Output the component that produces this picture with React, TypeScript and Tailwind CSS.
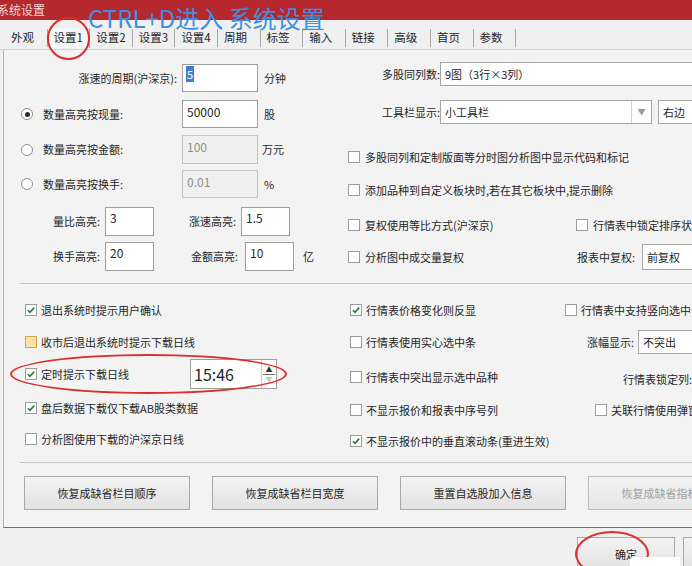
import React from "react";

const tabs = ["外观", "设置1", "设置2", "设置3", "设置4", "周期", "标签", "输入", "链接", "高级", "首页", "参数"];

function Check({ on, hover }: { on?: boolean; hover?: boolean }) {
  return (
    <span
      className={
        hover
          ? "w-[12px] h-[12px] shrink-0 border border-[#d6a445] bg-[#f9e2a6] flex items-center justify-center"
          : "w-[12px] h-[12px] shrink-0 border border-[#9c9c9c] bg-white flex items-center justify-center"
      }
    >
      {on && (
        <svg width="10" height="10" viewBox="0 0 10 10">
          <path d="M1.8 5.2 L4 7.4 L8.2 2.6" fill="none" stroke="#2c7a3f" strokeWidth="1.6" />
        </svg>
      )}
    </span>
  );
}

function Radio({ on }: { on?: boolean }) {
  return (
    <span className="w-[12px] h-[12px] shrink-0 rounded-full border border-[#8e8e8e] bg-white flex items-center justify-center">
      {on && <span className="w-[5px] h-[5px] rounded-full bg-[#2a2a2a]" />}
    </span>
  );
}

function CheckRow({ on, hover, label }: { on?: boolean; hover?: boolean; label: string }) {
  return (
    <div className="flex items-center whitespace-nowrap">
      <Check on={on} hover={hover} />
      <span className="ml-[4px]">{label}</span>
    </div>
  );
}

export default function App() {
  return (
    <div className="relative w-[692px] h-[566px] overflow-hidden bg-[#f0f0f0] text-[11px] leading-none text-[#262626] font-['Noto_Sans_CJK_SC','Noto_Sans',sans-serif]">
      {/* title bar */}
      <div className="h-[20px] bg-[#b5282d] text-[#f6d9d9] text-[12px] flex items-center -ml-[3px]">系统设置</div>

      {/* tab strip */}
      <div className="h-[30px] flex items-end pl-[5px] border-b border-[#d4d4d4]">
        {tabs.map((t, i) => (
          <div
            key={t}
            className={
              i === 1
                ? "w-[42.6px] h-[20px] mb-[1px] pl-[6px] flex items-center border-r border-[#a8a8a8] bg-[#f7f7f7] text-[11.5px]"
                : "w-[42.6px] h-[18px] mb-[2px] pl-[6px] flex items-center border-r border-[#a8a8a8] text-[11.5px]"
            }
          >
            {t}
          </div>
        ))}
      </div>

      {/* panel */}
      <div className="ml-[3px] h-[478px] border-l border-[#b4b4b4] border-b border-b-[#707070] bg-[#f3f3f3] flex flex-col">
        {/* top section */}
        <div className="h-[233px] flex">
          <div className="w-[331px] shrink-0 flex flex-col">
            <div className="mt-[14px] h-[28px] flex items-center">
              <span className="w-[173px] text-right">涨速的周期(沪深京):</span>
              <div className="ml-[5px] w-[76px] h-full bg-white border border-[#9e9e9e] px-[3px] pt-[4px]">
                <span className="bg-[#3d7fd6] text-white px-px">5</span>
              </div>
              <span className="ml-[6px]">分钟</span>
            </div>
            <div className="mt-[8px] h-[28px] flex items-center">
              <div className="w-[178px] flex items-center pl-[17px]">
                <Radio on />
                <span className="ml-[10px]">数量高亮按现量:</span>
              </div>
              <div className="w-[76px] h-full bg-white border border-[#9e9e9e] px-[4px] pt-[5px] text-[12px]">50000</div>
              <span className="ml-[6px]">股</span>
            </div>
            <div className="mt-[7px] h-[29px] flex items-center">
              <div className="w-[178px] flex items-center pl-[17px]">
                <Radio />
                <span className="ml-[10px]">数量高亮按金额:</span>
              </div>
              <div className="w-[76px] h-full bg-[#f0f0f0] border border-[#c4c4c4] px-[4px] pt-[5px] text-[12px] text-[#8c8c8c]">100</div>
              <span className="ml-[4px]">万元</span>
            </div>
            <div className="mt-[6px] h-[28px] flex items-center">
              <div className="w-[178px] flex items-center pl-[17px]">
                <Radio />
                <span className="ml-[10px]">数量高亮按换手:</span>
              </div>
              <div className="w-[76px] h-full bg-[#f0f0f0] border border-[#c4c4c4] px-[4px] pt-[5px] text-[12px] text-[#8c8c8c]">0.01</div>
              <span className="ml-[6px]">%</span>
            </div>
            <div className="mt-[9px] h-[29px] flex items-center">
              <span className="w-[96px] text-right">量比高亮:</span>
              <div className="ml-[5px] w-[49px] h-full bg-white border border-[#9e9e9e] px-[4px] pt-[4px] text-[12px]">3</div>
              <span className="w-[82px] text-right">涨速高亮:</span>
              <div className="ml-[5px] w-[49px] h-full bg-white border border-[#9e9e9e] px-[4px] pt-[4px] text-[12px]">1.5</div>
            </div>
            <div className="mt-[6px] h-[29px] flex items-center">
              <span className="w-[96px] text-right">换手高亮:</span>
              <div className="ml-[5px] w-[49px] h-full bg-white border border-[#9e9e9e] px-[4px] pt-[4px] text-[12px]">20</div>
              <span className="w-[84px] text-right">金额高亮:</span>
              <div className="ml-[7px] w-[49px] h-full bg-white border border-[#9e9e9e] px-[4px] pt-[4px] text-[12px]">10</div>
              <span className="ml-[9px]">亿</span>
            </div>
          </div>

          <div className="flex-1 flex flex-col whitespace-nowrap">
            <div className="mt-[12px] h-[24px] flex items-center">
              <span className="w-[105px] shrink-0 text-right">多股同列数:</span>
              <div className="w-[260px] shrink-0 h-full bg-white border border-[#a6a6a6] px-[4px] flex items-center">9图（3行×3列）</div>
            </div>
            <div className="mt-[14px] h-[24px] flex items-center">
              <span className="w-[105px] shrink-0 text-right">工具栏显示:</span>
              <div className="w-[212px] shrink-0 h-full bg-white border border-[#a6a6a6] flex">
                <span className="flex-1 px-[4px] flex items-center">小工具栏</span>
                <span className="w-[20px] border-l border-[#d0d0d0] flex items-center justify-center text-[#9a9a9a] text-[8px]">▼</span>
              </div>
              <div className="ml-[6px] w-[60px] shrink-0 h-full bg-white border border-[#a6a6a6] px-[4px] flex items-center">右边</div>
            </div>
            <div className="mt-[20px] h-[26px] flex items-center pl-[13px]">
              <Check />
              <span className="ml-[5px]">多股同列和定制版面等分时图分析图中显示代码和标记</span>
            </div>
            <div className="mt-[7px] h-[26px] flex items-center pl-[13px]">
              <Check />
              <span className="ml-[5px]">添加品种到自定义板块时,若在其它板块中,提示删除</span>
            </div>
            <div className="mt-[9px] h-[26px] flex items-center pl-[13px]">
              <div className="w-[228px] shrink-0 flex items-center">
                <Check />
                <span className="ml-[5px]">复权使用等比方式(沪深京)</span>
              </div>
              <Check />
              <span className="ml-[5px]">行情表中锁定排序状态</span>
            </div>
            <div className="mt-[6px] h-[26px] flex items-center pl-[13px]">
              <div className="w-[229px] shrink-0 flex items-center">
                <Check />
                <span className="ml-[5px]">分析图中成交量复权</span>
              </div>
              <span className="w-[63px] shrink-0">报表中复权:</span>
              <div className="ml-[2px] w-[60px] shrink-0 h-full bg-white border border-[#a6a6a6] px-[4px] flex items-center">前复权</div>
            </div>
          </div>
        </div>

        <div className="h-px bg-[#c6c6c6] ml-[16px]" />

        {/* middle section */}
        <div className="h-[178px] flex">
          <div className="w-[331px] shrink-0 flex flex-col pl-[21px]">
            <div className="mt-[11px] h-[30px] flex items-center">
              <CheckRow on label="退出系统时提示用户确认" />
            </div>
            <div className="mt-[2px] h-[30px] flex items-center">
              <CheckRow hover label="收市后退出系统时提示下载日线" />
            </div>
            <div className="mt-[2px] h-[30px] flex items-center">
              <div className="w-[165px] shrink-0">
                <CheckRow on label="定时提示下载日线" />
              </div>
              <div className="w-[87px] h-full bg-white border border-[#9e9e9e] flex">
                <span className="flex-1 pl-[3px] flex items-center text-[16px] text-[#1e1e1e]">15:46</span>
                <div className="w-[15px] border-l border-[#cfcfcf] flex flex-col">
                  <span className="flex-1 flex items-end justify-center text-[7px] text-[#333] pb-[1px]">▲</span>
                  <span className="h-px bg-[#6a6a6a] mx-[1px]" />
                  <span className="flex-1 flex items-start justify-center text-[7px] text-[#c8c8c8] pt-[1px]">▼</span>
                </div>
              </div>
            </div>
            <div className="mt-[4px] h-[30px] flex items-center">
              <CheckRow on label="盘后数据下载仅下载AB股类数据" />
            </div>
            <div className="mt-[1px] h-[30px] flex items-center">
              <CheckRow label="分析图使用下载的沪深京日线" />
            </div>
          </div>

          <div className="flex-1 flex flex-col pl-[15px] whitespace-nowrap">
            <div className="mt-[11px] h-[30px] flex items-center">
              <div className="w-[215px] shrink-0">
                <CheckRow on label="行情表价格变化则反显" />
              </div>
              <CheckRow label="行情表中支持竖向选中" />
            </div>
            <div className="mt-[2px] h-[30px] flex items-center">
              <div className="w-[215px] shrink-0">
                <CheckRow label="行情表使用实心选中条" />
              </div>
              <span className="w-[69px] shrink-0 text-right">涨幅显示:</span>
              <div className="ml-[4px] w-[60px] shrink-0 h-[24px] bg-white border border-[#a6a6a6] px-[4px] flex items-center">不突出</div>
            </div>
            <div className="mt-[5px] h-[30px] flex items-center">
              <div className="w-[215px] shrink-0">
                <CheckRow label="行情表中突出显示选中品种" />
              </div>
              <span className="ml-[58px] mt-[4px]">行情表锁定列:</span>
            </div>
            <div className="mt-[3px] h-[30px] flex items-center">
              <div className="w-[215px] shrink-0">
                <CheckRow label="不显示报价和报表中序号列" />
              </div>
              <div className="ml-[30px]">
                <CheckRow label="关联行情使用弹窗" />
              </div>
            </div>
            <div className="mt-[1px] h-[30px] flex items-center">
              <CheckRow on label="不显示报价中的垂直滚动条(重进生效)" />
            </div>
          </div>
        </div>

        <div className="h-px bg-[#c6c6c6] ml-[16px]" />

        {/* buttons */}
        <div className="mt-[13px] h-[34px] flex gap-[22px] pl-[20px] whitespace-nowrap">
          {["恢复成缺省栏目顺序", "恢复成缺省栏目宽度", "重置自选股加入信息"].map(b => (
            <div key={b} className="w-[166px] shrink-0 h-full border border-[#a9a9a9] bg-gradient-to-b from-[#f3f3f3] to-[#e2e2e2] flex items-center justify-center">
              {b}
            </div>
          ))}
          <div className="w-[166px] shrink-0 h-full border border-[#bdbdbd] bg-gradient-to-b from-[#f3f3f3] to-[#e6e6e6] flex items-center justify-center text-[#a0a0a0]">
            恢复成缺省指标参数
          </div>
        </div>
      </div>

      {/* dialog buttons */}
      <div className="flex pl-[577px] pt-[9px]">
        <div className="w-[98px] h-[34px] shrink-0 border border-[#a9a9a9] bg-gradient-to-b from-[#f3f3f3] to-[#e2e2e2] flex items-center justify-center">
          确定
        </div>
        <div className="ml-[8px] w-[98px] h-[34px] shrink-0 border border-[#a9a9a9] bg-gradient-to-b from-[#f3f3f3] to-[#e2e2e2]" />
      </div>

      {/* annotations */}
      <div className="absolute left-[88px] top-[4px] text-[24px] leading-[28px] text-[#3d8fe0] whitespace-nowrap">CTRL+D进入 系统设置</div>
      <div className="absolute left-[47px] top-[17px] w-[43px] h-[43px] rounded-full border-2 border-[#d8302c]" />
      <div className="absolute left-[10px] top-[354px] w-[277px] h-[40px] rounded-[50%] border-2 border-[#d8302c]" />
      <div className="absolute left-[575px] top-[531px] w-[74px] h-[46px] rounded-[50%] border-2 border-[#d8302c]" />
      <div className="absolute left-[630px] top-[557px] w-[50px] h-[12px] bg-white rounded-tl-[3px]" />
    </div>
  );
}
